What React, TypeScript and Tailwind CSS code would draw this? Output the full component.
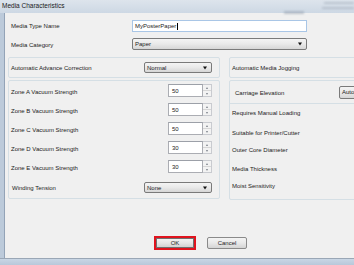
import React from "react";

const font = { fontFamily: '"Liberation Sans", Arial, sans-serif' };

function Combo({ text, w, h = 11 }: { text: string; w: string; h?: number }) {
  return (
    <div
      className={`${w} relative flex items-center rounded-[2px] border border-[#7a7a7a] bg-gradient-to-b from-[#f4f4f4] via-[#e9e9e9] to-[#d6d6d6] pl-[2px] text-[6px] text-[#1b1b1b] shrink-0`}
      style={{ height: h }}
    >
      <span className="leading-none">{text}</span>
      <div className="absolute right-[4px] top-1/2 -translate-y-1/2 w-0 h-0 border-l-[2.5px] border-r-[2.5px] border-t-[3px] border-l-transparent border-r-transparent border-t-[#111]" />
    </div>
  );
}

function Spin({ value }: { value: string }) {
  return (
    <div className="flex h-[13px] shrink-0">
      <div className="w-[35px] h-full border border-[#abadb3] border-t-[#9ca0a8] bg-white flex items-center pl-[3px] text-[6px] text-[#1b1b1b] leading-none">
        {value}
      </div>
      <div className="w-[9px] h-full flex flex-col border border-l-0 border-[#c9cbd0] bg-[#f3f3f3]">
        <div className="flex-1 flex items-center justify-center border-b border-[#d6d6d6]">
          <div className="w-0 h-0 border-l-[1.5px] border-r-[1.5px] border-b-[2px] border-l-transparent border-r-transparent border-b-[#7a7f88]" />
        </div>
        <div className="flex-1 flex items-center justify-center">
          <div className="w-0 h-0 border-l-[1.5px] border-r-[1.5px] border-t-[2px] border-l-transparent border-r-transparent border-t-[#7a7f88]" />
        </div>
      </div>
    </div>
  );
}

function ZoneRow({ label, value }: { label: string; value: string }) {
  return (
    <div className="flex items-center justify-between h-[13px]">
      <span className="text-[6px] leading-none text-[#222] pt-[2px]">{label}</span>
      <Spin value={value} />
    </div>
  );
}

export default function App() {
  return (
    <div className="w-[354px] h-[265px] overflow-hidden flex flex-col bg-[#f0f0f0]" style={font}>
      {/* Title bar */}
      <div className="relative h-[13px] shrink-0 bg-gradient-to-b from-[#dde4ec] to-[#cdd8e4] flex items-center pl-[2px]">
        <span className="text-[6.5px] leading-none text-[#1a1a1a]">Media Characteristics</span>
        <div className="absolute left-[284px] top-[11px] w-[20px] h-[3px] bg-[#9aa5b3] opacity-60 blur-[1px]" />
        <div className="absolute left-[324px] top-[2px] w-[30px] h-[2px] bg-[#9aa5b3] opacity-50 blur-[1px]" />
        <div className="absolute left-[322px] top-[7px] w-[32px] h-[2px] bg-[#9aa5b3] opacity-50 blur-[1px]" />
      </div>

      {/* Middle */}
      <div className="flex flex-1 min-h-0">
        <div className="w-[5px] shrink-0 bg-[#bccada] border-r border-[#93a3b7]" />
        <div className="w-[400px] shrink-0 bg-[#f0f0f0] flex flex-col">
          {/* Media Type Name */}
          <div className="mt-[7px] h-[12px] flex items-center">
            <span className="ml-[6px] w-[121px] text-[6px] leading-none text-[#222]">Media Type Name</span>
            <div className="w-[175px] h-[12px] border border-[#a9c6e6] bg-white flex items-center pl-[2px] text-[6px] leading-none text-[#1b1b1b]">
              MyPosterPaper
              <span className="inline-block w-px h-[7px] bg-black ml-px" />
            </div>
          </div>
          {/* Media Category */}
          <div className="mt-[6px] h-[12px] flex items-center">
            <span className="ml-[6px] w-[121px] text-[6px] leading-none text-[#222] pt-[2px]">Media Category</span>
            <Combo text="Paper" w="w-[175px]" h={12} />
          </div>

          {/* Groups */}
          <div className="mt-[7px] flex pl-[3px] gap-[9px]">
            {/* Left column */}
            <div className="w-[212px] flex flex-col gap-[2px]">
              <div className="h-[21px] rounded-[2px] border border-[#d5dfe5] flex items-center justify-between pl-[2px] pr-[7px]">
                <span className="text-[6px] leading-none text-[#222]">Automatic Advance Correction</span>
                <Combo text="Normal" w="w-[68px]" />
              </div>
              <div className="h-[119px] rounded-[2px] border border-[#d5dfe5] flex flex-col pl-[2px] pr-[7px] pt-[3px] gap-[6px]">
                <ZoneRow label="Zone A Vacuum Strength" value="50" />
                <ZoneRow label="Zone B Vacuum Strength" value="50" />
                <ZoneRow label="Zone C Vacuum Strength" value="50" />
                <ZoneRow label="Zone D Vacuum Strength" value="30" />
                <ZoneRow label="Zone E Vacuum Strength" value="30" />
                <div className="mt-[3px] flex items-center justify-between h-[11px] pl-[1px]">
                  <span className="text-[6px] leading-none text-[#222]">Winding Tension</span>
                  <Combo text="None" w="w-[68px]" />
                </div>
              </div>
            </div>

            {/* Right column */}
            <div className="flex-1 flex flex-col gap-[2px]">
              <div className="h-[21px] rounded-[2px] border border-[#d5dfe5] flex items-center pl-[2px]">
                <span className="text-[6px] leading-none text-[#222]">Automatic Media Jogging</span>
              </div>
              <div className="h-[120px] rounded-[2px] border border-[#d5dfe5] flex flex-col">
                <div className="h-[23px] shrink-0 border-b border-[#d5dfe5] flex items-center pl-[5px]">
                  <span className="w-[104px] text-[6px] leading-none text-[#222] pt-[1px]">Carriage Elevation</span>
                  <Combo text="Automatic" w="w-[60px]" h={13} />
                </div>
                <div className="flex flex-col pl-[2px] text-[6px] leading-[10px] text-[#222]">
                  <span className="mt-[4px] h-[10px]">Requires Manual Loading</span>
                  <span className="mt-[10px] h-[10px]">Suitable for Printer/Cutter</span>
                  <span className="mt-[7px] h-[10px]">Outer Core Diameter</span>
                  <span className="mt-[9px] h-[10px]">Media Thickness</span>
                  <span className="mt-[7px] h-[10px]">Moist Sensitivity</span>
                </div>
              </div>
            </div>
          </div>

          {/* Buttons */}
          <div className="mt-[36px] flex items-center">
            <div className="ml-[149px] w-[42px] h-[14px] border-2 border-[#e0141e] flex">
              <div className="flex-1 border border-[#707070] bg-gradient-to-b from-[#f2f2f2] via-[#e6e6e6] to-[#d2d2d2] flex items-center justify-center text-[6px] leading-none text-[#1b1b1b]">
                OK
              </div>
            </div>
            <div className="ml-[11px] w-[40px] h-[12px] rounded-[2px] border border-[#8a8a8a] bg-gradient-to-b from-[#f4f4f4] via-[#e8e8e8] to-[#d4d4d4] flex items-center justify-center text-[6px] leading-none text-[#1b1b1b]">
              Cancel
            </div>
          </div>
        </div>
      </div>

      {/* Bottom frame */}
      <div className="h-[7px] shrink-0 border-t border-[#9aa7b6] bg-gradient-to-b from-[#c9d6e5] to-[#b8c8da]" />
    </div>
  );
}
